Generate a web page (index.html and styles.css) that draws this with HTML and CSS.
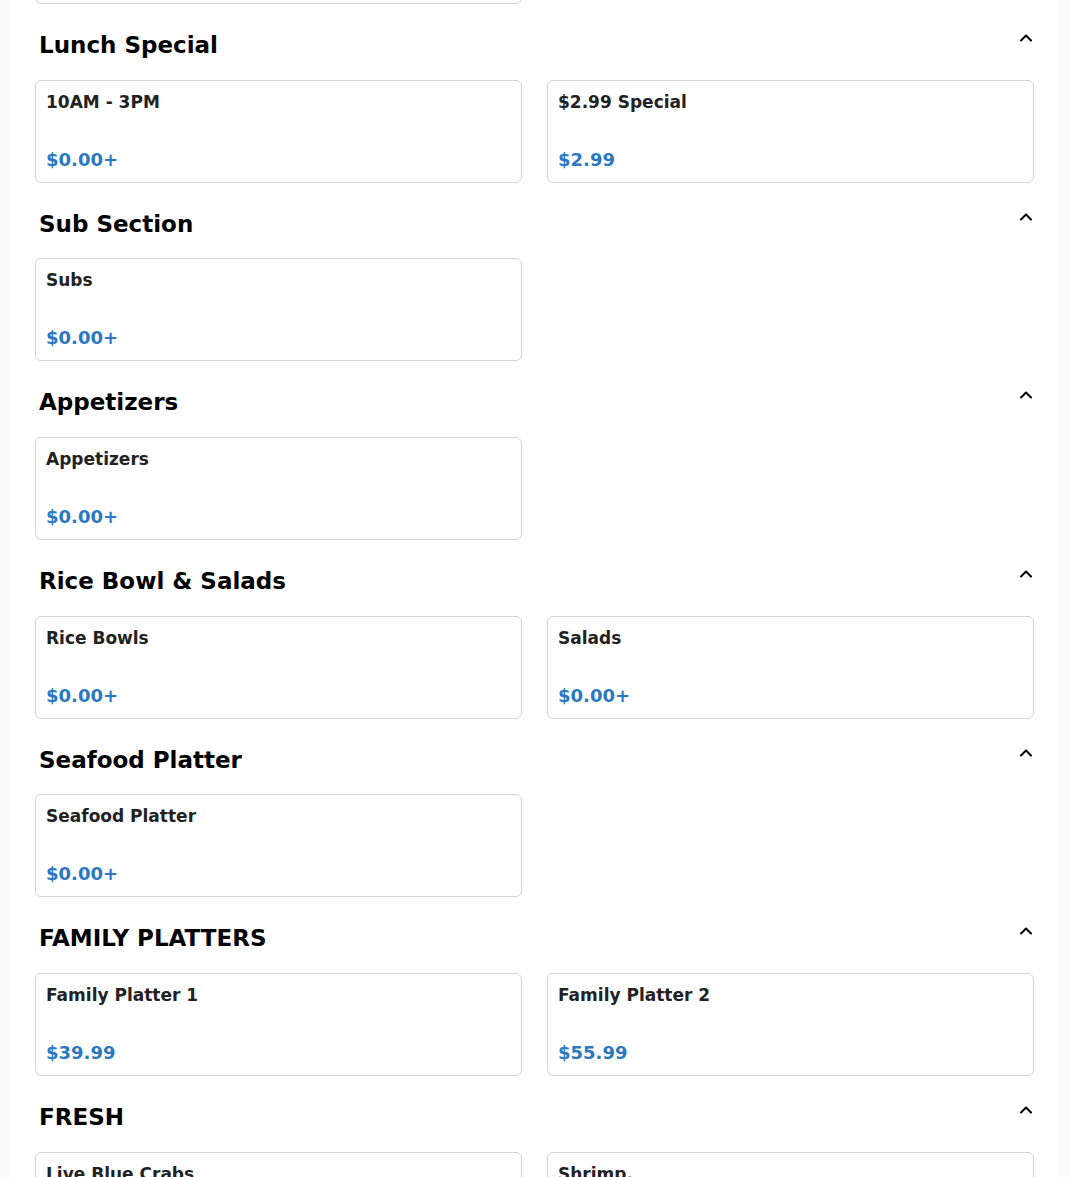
FILE: index.html
```html
<!DOCTYPE html>
<html>
<head>
<meta charset="utf-8">
<link rel="stylesheet" href="styles.css">
</head>
<body>
<div class="page">
  <div class="grid prev">
    <div class="card"><div class="title">&nbsp;</div><div class="price">&nbsp;</div></div>
  </div>

  <section class="section">
    <div class="head"><h2>Lunch Special</h2><svg class="chev" viewBox="0 0 14 14"><path d="M2 9.5 L7 4.5 L12 9.5"/></svg></div>
    <div class="grid">
      <div class="card"><div class="title">10AM - 3PM</div><div class="price">$0.00+</div></div>
      <div class="card"><div class="title">$2.99 Special</div><div class="price">$2.99</div></div>
    </div>
  </section>

  <section class="section">
    <div class="head"><h2>Sub Section</h2><svg class="chev" viewBox="0 0 14 14"><path d="M2 9.5 L7 4.5 L12 9.5"/></svg></div>
    <div class="grid">
      <div class="card"><div class="title">Subs</div><div class="price">$0.00+</div></div>
    </div>
  </section>

  <section class="section">
    <div class="head"><h2>Appetizers</h2><svg class="chev" viewBox="0 0 14 14"><path d="M2 9.5 L7 4.5 L12 9.5"/></svg></div>
    <div class="grid">
      <div class="card"><div class="title">Appetizers</div><div class="price">$0.00+</div></div>
    </div>
  </section>

  <section class="section">
    <div class="head"><h2>Rice Bowl &amp; Salads</h2><svg class="chev" viewBox="0 0 14 14"><path d="M2 9.5 L7 4.5 L12 9.5"/></svg></div>
    <div class="grid">
      <div class="card"><div class="title">Rice Bowls</div><div class="price">$0.00+</div></div>
      <div class="card"><div class="title">Salads</div><div class="price">$0.00+</div></div>
    </div>
  </section>

  <section class="section">
    <div class="head"><h2>Seafood Platter</h2><svg class="chev" viewBox="0 0 14 14"><path d="M2 9.5 L7 4.5 L12 9.5"/></svg></div>
    <div class="grid">
      <div class="card"><div class="title">Seafood Platter</div><div class="price">$0.00+</div></div>
    </div>
  </section>

  <section class="section">
    <div class="head"><h2>FAMILY PLATTERS</h2><svg class="chev" viewBox="0 0 14 14"><path d="M2 9.5 L7 4.5 L12 9.5"/></svg></div>
    <div class="grid">
      <div class="card"><div class="title">Family Platter 1</div><div class="price">$39.99</div></div>
      <div class="card"><div class="title">Family Platter 2</div><div class="price">$55.99</div></div>
    </div>
  </section>

  <section class="section">
    <div class="head"><h2>FRESH</h2><svg class="chev" viewBox="0 0 14 14"><path d="M2 9.5 L7 4.5 L12 9.5"/></svg></div>
    <div class="grid">
      <div class="card"><div class="title">Live Blue Crabs</div><div class="price">$0.00+</div></div>
      <div class="card"><div class="title">Shrimp.</div><div class="price">$0.00+</div></div>
    </div>
  </section>
</div>
</body>
</html>
```

FILE: styles.css
```css
html, body {
  margin: 0;
  padding: 0;
  background: #fafafa;
  font-family: "DejaVu Sans", "Liberation Sans", sans-serif;
  height: 1177px;
  overflow: hidden;
}

.page {
  margin: 0 11px 0 10px;
  background: #ffffff;
  padding: 0 25px 200px 25px;
}

.prev {
  margin-top: -99px;
}

.section {
  padding-top: 28px;
}

.head {
  display: flex;
  justify-content: space-between;
  align-items: flex-start;
  padding: 0 1px 0 4px;
  margin-bottom: 20.67px;
}

.head h2 {
  margin: 0;
  font-size: 23px;
  line-height: 27px;
  font-weight: bold;
  color: #000;
}

.chev {
  width: 14px;
  height: 14px;
  margin-top: -1px;
  fill: none;
  stroke: #000;
  stroke-width: 2;
  stroke-linecap: round;
  stroke-linejoin: round;
}

.grid {
  display: grid;
  grid-template-columns: 1fr 1fr;
  column-gap: 25px;
}

.card {
  box-sizing: border-box;
  height: 103px;
  border: 1px solid #d4d4d4;
  border-radius: 6px;
  padding: 11px 10px 11px 10px;
  display: flex;
  flex-direction: column;
  justify-content: space-between;
  background: #fff;
}

.title {
  font-size: 17px;
  line-height: 20px;
  font-weight: bold;
  color: #222;
}

.price {
  font-size: 18px;
  line-height: 22px;
  font-weight: bold;
  color: #2a78c2;
}
```
